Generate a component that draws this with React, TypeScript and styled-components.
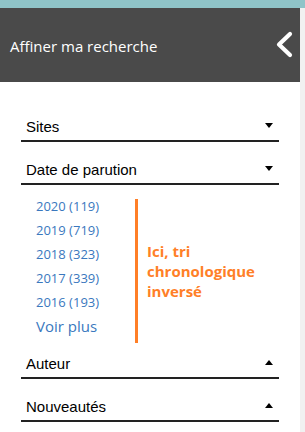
import React from 'react';
import styled, { createGlobalStyle } from 'styled-components';

const GlobalStyle = createGlobalStyle`
  html, body {
    margin: 0;
    padding: 0;
    background: #ffffff;
  }
  body {
    font-family: 'Open Sans', 'Liberation Sans', sans-serif;
  }
`;

type Facet = { label: string; open: boolean };

const years = [
  { year: 2020, count: 119 },
  { year: 2019, count: 719 },
  { year: 2018, count: 323 },
  { year: 2017, count: 339 },
  { year: 2016, count: 193 },
];

const Caret = ({ up }: { up?: boolean }) => <Triangle $up={up} />;

const FacetRow = ({ label, open }: Facet) => (
  <FacetHeader>
    <FacetTitle>{label}</FacetTitle>
    <Caret up={open} />
  </FacetHeader>
);

export default function App() {
  return (
    <Page>
      <GlobalStyle />
      <TopStrip />
      <Body>
        <Panel>
          <Header>
            <HeaderTitle>Affiner ma recherche</HeaderTitle>
            <svg width="20" height="28" viewBox="0 0 20 28">
              <polyline
                points="15,3 4,13.5 15,24"
                fill="none"
                stroke="#ffffff"
                strokeWidth="4.2"
                strokeLinecap="round"
                strokeLinejoin="round"
              />
            </svg>
          </Header>
          <Facets>
            <FacetRow label="Sites" open={false} />
            <FacetRow label="Date de parution" open={false} />
            <DateBlock>
              <YearList>
                {years.map((y) => (
                  <YearLink key={y.year}>
                    {y.year} ({y.count})
                  </YearLink>
                ))}
                <MoreLink>Voir plus</MoreLink>
              </YearList>
              <Note>Ici, tri chronologique inversé</Note>
            </DateBlock>
            <FacetRow label="Auteur" open />
            <FacetRow label="Nouveautés" open />
          </Facets>
        </Panel>
        <Scrollbar />
      </Body>
    </Page>
  );
}

const Page = styled.div`
  width: 305px;
  height: 432px;
  overflow: hidden;
`;

const TopStrip = styled.div`
  height: 8px;
  background: #8fc4c8;
`;

const Body = styled.div`
  display: flex;
  height: 424px;
`;

const Panel = styled.div`
  width: 300px;
  background: #ffffff;
`;

const Scrollbar = styled.div`
  width: 5px;
  background: #f1f1f1;
`;

const Header = styled.div`
  height: 74px;
  background: #4a4a4a;
  display: flex;
  align-items: center;
  justify-content: space-between;
  padding: 0 5px 0 10px;
  box-sizing: border-box;

  svg {
    display: block;
    margin-top: -1px;
  }
`;

const HeaderTitle = styled.div`
  color: #ffffff;
  font-family: 'Open Sans', sans-serif;
  font-size: 15px;
  line-height: 20px;
  margin-top: 1px;
`;

const Facets = styled.div`
  padding: 17px 21px 0 21px;
`;

const FacetHeader = styled.div`
  display: flex;
  align-items: center;
  justify-content: space-between;
  margin-top: 19px;
  padding: 0 6px 4px 5px;
  border-bottom: 2px solid #222222;
`;

const FacetTitle = styled.span`
  font-family: 'Liberation Sans', Arial, sans-serif;
  font-size: 15px;
  line-height: 18px;
  color: #000000;
`;

const Triangle = styled.span<{ $up?: boolean }>`
  width: 0;
  height: 0;
  margin-top: -3px;
  border-left: 4px solid transparent;
  border-right: 4px solid transparent;
  ${({ $up }) =>
    $up ? 'border-bottom: 5px solid #000000;' : 'border-top: 5px solid #000000;'}
`;

const DateBlock = styled.div`
  display: flex;
  align-items: flex-start;
  padding: 9px 0 0 15px;
  margin-bottom: -7px;
`;

const YearList = styled.div`
  display: flex;
  flex-direction: column;
  width: 99px;
`;

const YearLink = styled.a`
  font-family: 'Open Sans', sans-serif;
  font-size: 13px;
  line-height: 24px;
  color: #3a78be;
  text-decoration: none;
`;

const MoreLink = styled(YearLink)`
  font-size: 15px;
`;

const Note = styled.div`
  display: flex;
  align-items: center;
  margin-top: 5px;
  height: 144px;
  width: 120px;
  border-left: 3px solid #ff7f27;
  padding-left: 9px;
  box-sizing: border-box;
  font-family: 'Open Sans', sans-serif;
  font-weight: 700;
  font-size: 15px;
  line-height: 20px;
  color: #ff7f27;
`;
